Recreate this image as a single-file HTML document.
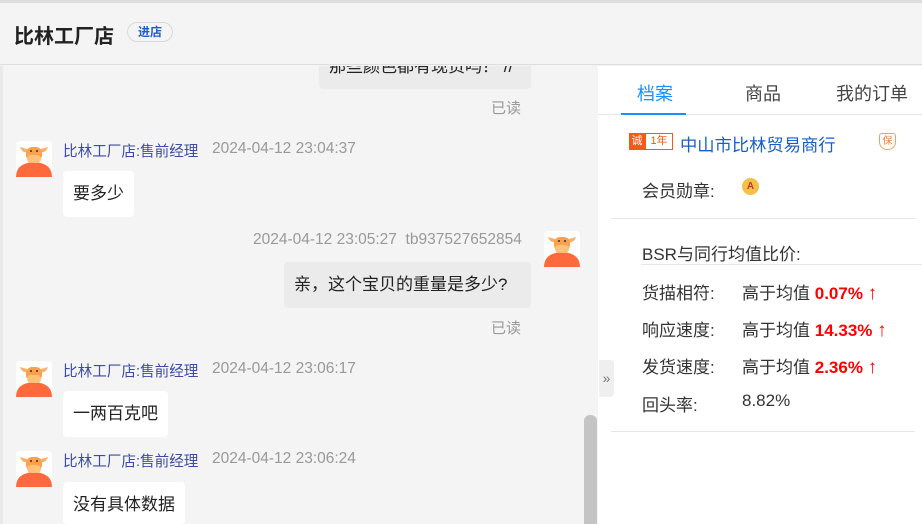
<!DOCTYPE html>
<html style="width:922px;height:524px;overflow:hidden"><head><meta charset="utf-8"><style>
*{margin:0;padding:0;box-sizing:border-box}
body{width:922px;height:524px;overflow:hidden;background:#f4f4f4;font-family:"Liberation Sans","Noto Sans CJK SC",sans-serif;position:relative;color:#222}
.a{position:absolute}
.t{font-size:18px;white-space:nowrap}
.name{font-size:14.6px;color:#3d4aa6;white-space:nowrap}
.time{font-size:15.5px;color:#999;white-space:nowrap}
.bub{background:#fff;border-radius:4px;font-size:17px;padding:0 10px;line-height:46px;color:#222;white-space:nowrap}
.bb{background:#ebebeb}
.rd{font-size:15px;color:#999}
.lbl{font-size:17px;color:#333;white-space:nowrap}
.red{color:#f00;font-weight:bold}
</style></head><body>
<div class="a" style="left:0;top:0;width:922px;height:3px;background:#dcdcdc"></div>
<div class="a" style="left:0;top:3px;width:922px;height:62px;background:#f4f4f4;border-bottom:1px solid #ddd"></div>
<div class="a" style="left:14px;top:20px;font-size:20px;font-weight:bold;color:#222">比林工厂店</div>
<div class="a" style="left:127px;top:22px;width:46px;height:20px;border:1px solid #d8d8d8;border-radius:10px;font-size:12px;color:#1a5fc8;text-align:center;line-height:18px;font-weight:bold">进店</div>
<div class="a" style="left:0;top:66px;width:3px;height:458px;background:#e8e8e8"></div>

<div class="a bub bb" style="left:319px;top:42px;width:212px;height:47px;line-height:50px;clip-path:inset(24px 0 0 0)">那些颜色都有现货吗？ //</div>
<div class="a rd" style="left:491px;top:97px">已读</div>

<svg class="a" style="left:16px;top:141px" width="36" height="36" viewBox="0 0 36 36"><rect width="36" height="36" rx="4" fill="#fff"/><path d="M0 36 Q0 22 18 21 Q36 22 36 36Z" fill="#ff6a3d"/><path d="M4 6 Q6 12 11 11 L11 8Z M32 6 Q30 12 25 11 L25 8Z" fill="#f7b26a"/><rect x="10" y="6" width="16" height="14" rx="6" fill="#ffa04d"/><rect x="11" y="14" width="14" height="8" rx="4" fill="#ffc27a"/><circle cx="15" cy="10" r="1" fill="#333"/><circle cx="21" cy="10" r="1" fill="#333"/></svg>
<div class="a name" style="left:63px;top:140px">比林工厂店:售前经理</div>
<div class="a time" style="left:212px;top:140px">2024-04-12 23:04:37</div>
<div class="a bub" style="left:63px;top:171px">要多少</div>

<div class="a time" style="left:253px;top:231px">2024-04-12 23:05:27&nbsp;&nbsp;tb937527652854</div>
<svg class="a" style="left:544px;top:231px" width="36" height="36" viewBox="0 0 36 36"><rect width="36" height="36" rx="4" fill="#fff"/><path d="M0 36 Q0 22 18 21 Q36 22 36 36Z" fill="#ff6a3d"/><path d="M4 6 Q6 12 11 11 L11 8Z M32 6 Q30 12 25 11 L25 8Z" fill="#f7b26a"/><rect x="10" y="6" width="16" height="14" rx="6" fill="#ffa04d"/><rect x="11" y="14" width="14" height="8" rx="4" fill="#ffc27a"/><circle cx="15" cy="10" r="1" fill="#333"/><circle cx="21" cy="10" r="1" fill="#333"/></svg>
<div class="a bub bb" style="left:284px;top:262px;width:247px">亲，这个宝贝的重量是多少?</div>
<div class="a rd" style="left:491px;top:317px">已读</div>

<svg class="a" style="left:16px;top:361px" width="36" height="36" viewBox="0 0 36 36"><rect width="36" height="36" rx="4" fill="#fff"/><path d="M0 36 Q0 22 18 21 Q36 22 36 36Z" fill="#ff6a3d"/><path d="M4 6 Q6 12 11 11 L11 8Z M32 6 Q30 12 25 11 L25 8Z" fill="#f7b26a"/><rect x="10" y="6" width="16" height="14" rx="6" fill="#ffa04d"/><rect x="11" y="14" width="14" height="8" rx="4" fill="#ffc27a"/><circle cx="15" cy="10" r="1" fill="#333"/><circle cx="21" cy="10" r="1" fill="#333"/></svg>
<div class="a name" style="left:63px;top:360px">比林工厂店:售前经理</div>
<div class="a time" style="left:212px;top:360px">2024-04-12 23:06:17</div>
<div class="a bub" style="left:63px;top:391px">一两百克吧</div>

<svg class="a" style="left:16px;top:451px" width="36" height="36" viewBox="0 0 36 36"><rect width="36" height="36" rx="4" fill="#fff"/><path d="M0 36 Q0 22 18 21 Q36 22 36 36Z" fill="#ff6a3d"/><path d="M4 6 Q6 12 11 11 L11 8Z M32 6 Q30 12 25 11 L25 8Z" fill="#f7b26a"/><rect x="10" y="6" width="16" height="14" rx="6" fill="#ffa04d"/><rect x="11" y="14" width="14" height="8" rx="4" fill="#ffc27a"/><circle cx="15" cy="10" r="1" fill="#333"/><circle cx="21" cy="10" r="1" fill="#333"/></svg>
<div class="a name" style="left:63px;top:450px">比林工厂店:售前经理</div>
<div class="a time" style="left:212px;top:450px">2024-04-12 23:06:24</div>
<div class="a bub" style="left:63px;top:482px;height:42px">没有具体数据</div>

<div class="a" style="left:584px;top:415px;width:13px;height:109px;background:#c4c4c4;border-radius:6px 6px 0 0"></div>

<div class="a" style="left:598px;top:66px;width:324px;height:458px;background:#fff"></div>
<div class="a" style="left:599px;top:360px;width:15px;height:37px;background:#efefef;border-radius:0 4px 4px 0;font-size:14px;color:#777;text-align:center;line-height:37px">»</div>

<div class="a t" style="left:637px;top:80px;color:#1890ff">档案</div>
<div class="a t" style="left:745px;top:80px;color:#444">商品</div>
<div class="a t" style="left:836px;top:80px;color:#444">我的订单</div>
<div class="a" style="left:598px;top:114px;width:324px;height:1px;background:#e6e6e6"></div>
<div class="a" style="left:621px;top:113px;width:65px;height:2px;background:#1890ff"></div>

<div class="a" style="left:629px;top:133px;width:16px;height:17px;background:#f25a16;color:#fff;font-size:11px;line-height:17px;text-align:center">诚</div>
<div class="a" style="left:645px;top:133px;width:28px;height:17px;border:1px solid #f25a16;color:#f25a16;font-size:11px;line-height:15px;text-align:center">1年</div>
<div class="a" style="left:680px;top:131px;font-size:17.3px;color:#1a5fc8;white-space:nowrap">中山市比林贸易商行</div>
<div class="a" style="left:879px;top:133px;width:17px;height:17px;border:1px solid #f0a060;border-radius:3px 3px 8px 8px;color:#e8803a;font-size:10px;text-align:center;line-height:15px">保</div>
<div class="a lbl" style="left:642px;top:177px">会员勋章:</div>
<div class="a" style="left:742px;top:178px;width:17px;height:17px;border-radius:50%;background:#f5c04a;color:#c0392b;font-size:10px;text-align:center;line-height:17px;font-weight:bold">A</div>
<div class="a" style="left:611px;top:218px;width:304px;height:1px;background:#e6e6e6"></div>

<div class="a lbl" style="left:642px;top:240px">BSR与同行均值比价:</div>
<div class="a" style="left:641px;top:264px;width:281px;height:1px;background:#e6e6e6"></div>
<div class="a lbl" style="left:642px;top:279px">货描相符:</div><div class="a lbl" style="left:742px;top:279px">高于均值 <span class="red">0.07%</span> <span class="red" style="font-size:19px">↑</span></div>
<div class="a lbl" style="left:642px;top:316px">响应速度:</div><div class="a lbl" style="left:742px;top:316px">高于均值 <span class="red">14.33%</span> <span class="red" style="font-size:19px">↑</span></div>
<div class="a lbl" style="left:642px;top:353px">发货速度:</div><div class="a lbl" style="left:742px;top:353px">高于均值 <span class="red">2.36%</span> <span class="red" style="font-size:19px">↑</span></div>
<div class="a lbl" style="left:642px;top:391px">回头率:</div><div class="a lbl" style="left:742px;top:391px">8.82%</div>
<div class="a" style="left:611px;top:431px;width:304px;height:1px;background:#e6e6e6"></div>
</body></html>
